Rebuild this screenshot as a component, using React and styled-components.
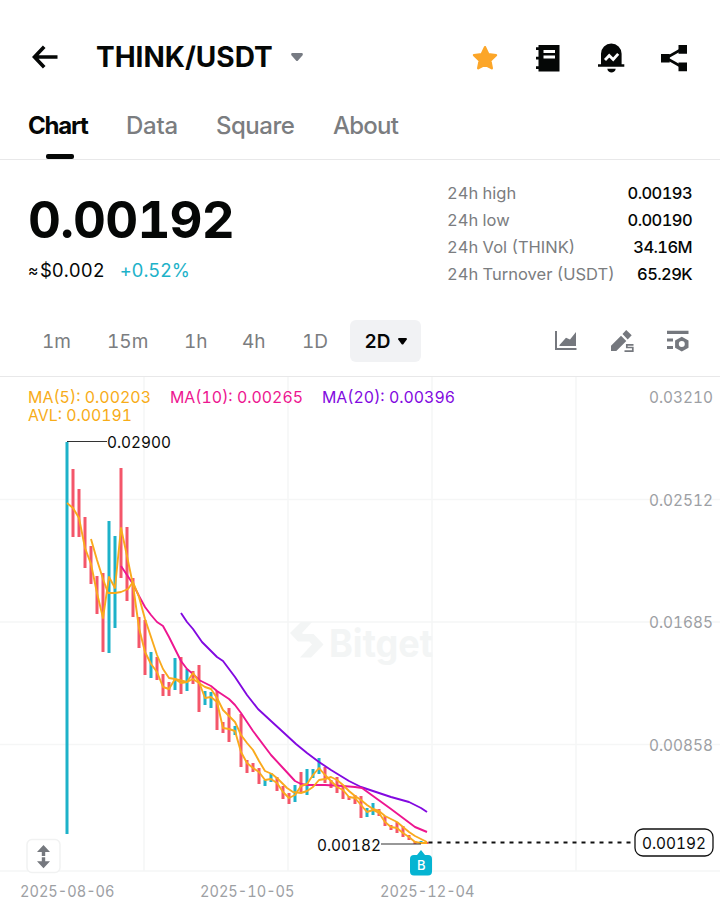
import React from 'react';
import styled, { createGlobalStyle } from 'styled-components';

const UP = '#1db2c9';
const DOWN = '#f4566a';

const tabs = [
	{ name: 'Chart', width: 98, spacing: -1.2 },
	{ name: 'Data', width: 90, spacing: -0.25 },
	{ name: 'Square', width: 117, spacing: -0.5 },
	{ name: 'About', width: 80, spacing: -0.75 },
];

const stats = [
	{ label: '24h high', value: '0.00193' },
	{ label: '24h low', value: '0.00190' },
	{ label: '24h Vol (THINK)', value: '34.16M' },
	{ label: '24h Turnover (USDT)', value: '65.29K' },
];

const periods = [
	{ name: '1m', width: 65 },
	{ name: '15m', width: 77 },
	{ name: '1h', width: 58 },
	{ name: '4h', width: 60 },
	{ name: '1D', width: 62 },
];

const legend = [
	{ text: 'MA(5): 0.00203', x: 28, y: 403, width: 123, color: '#f7ac18' },
	{ text: 'MA(10): 0.00265', x: 170, y: 403, width: 133, color: '#ed1690' },
	{ text: 'MA(20): 0.00396', x: 322, y: 403, width: 133, color: '#8209e0' },
	{ text: 'AVL: 0.00191', x: 28, y: 421, width: 104, color: '#f7ac18' },
];

const prices = [
	{ text: '0.03210', y: 403 },
	{ text: '0.02512', y: 506 },
	{ text: '0.01685', y: 628 },
	{ text: '0.00858', y: 751 },
];

const dates = [
	{ text: '2025-08-06', x: 20 },
	{ text: '2025-10-05', x: 200 },
	{ text: '2025-12-04', x: 380 },
];

// [top, bottom, rising]
const candles = [
	[442, 834, 1], [469, 537, 0], [489, 537, 0], [517, 568, 0], [546, 584, 0],
	[576, 614, 0], [573, 652, 0], [521, 653, 1], [536, 628, 1], [468, 578, 0],
	[527, 601, 0], [578, 617, 0], [617, 648, 0], [620, 675, 0], [652, 678, 1],
	[657, 680, 0], [674, 696, 0], [682, 696, 0], [658, 690, 1], [657, 694, 0],
	[669, 691, 1], [671, 684, 0], [665, 712, 0], [691, 705, 1], [692, 708, 1],
	[691, 730, 0], [722, 733, 0], [708, 742, 0], [726, 735, 1], [714, 767, 0],
	[760, 773, 0], [763, 772, 0], [768, 784, 0], [780, 786, 1], [773, 782, 1],
	[777, 791, 0], [786, 799, 0], [793, 804, 0], [785, 802, 1], [772, 793, 0],
	[769, 795, 1], [769, 778, 1], [758, 774, 1], [767, 783, 0], [780, 788, 0],
	[777, 793, 0], [786, 799, 0], [796, 800, 0], [795, 804, 0], [796, 818, 0],
	[808, 817, 1], [803, 815, 1], [809, 816, 0], [816, 826, 0], [825, 830, 0],
	[822, 833, 0], [826, 837, 0], [835, 840, 0], [841, 844, 0], [841, 844, 1],
	[842, 844, 0],
];

const averages = [
	{
		color: '#8209e0',
		points:
			'181,613 187,622 193,629 202,642 217,657 223,661 235,677 247,695 258,709 271,721 283,732 296,744 307,753 319,762 331,770 349,781 361,787 373,791 379,793 391,797 409,802 421,808 427,812',
	},
	{
		color: '#ed1690',
		points:
			'121,566 127,575 133,584 139,596 145,607 151,615 157,622 163,626 169,637 175,649 181,661 187,669 193,674 199,680 211,686 217,691 229,699 235,705 241,713 253,731 271,755 283,768 295,781 301,784 308,785 325,785 343,786 355,787 362,788 373,796 391,809 403,818 415,827 427,832',
	},
	{
		color: '#f9aa1d',
		points:
			'91,539 97,560 103,579 108,593 115,593 121,592 128,589 133,582 139,597 145,619 151,637 157,655 163,669 169,678 175,679 187,682 193,679 199,683 205,687 211,689 217,698 223,710 229,716 235,722 241,735 247,743 253,750 259,761 265,771 272,774 278,779 287,788 293,792 301,793 307,791 313,787 319,780 325,779 331,777 337,780 343,785 349,791 355,796 361,800 367,805 373,809 379,811 385,816 391,819 397,822 403,827 409,832 415,836 421,839 427,842',
	},
	{
		color: '#f9aa1d',
		points:
			'67,503 73,508 79,518 85,548 91,564 97,593 103,618 109,577 115,588 121,528 127,556 133,585 139,628 145,652 151,664 157,672 163,687 169,689 175,679 181,683 187,682 193,673 199,682 205,698 211,697 217,702 223,728 229,729 235,731 241,752 247,763 253,768 259,772 265,780 271,779 277,783 283,792 289,798 295,795 301,786 307,784 313,775 319,768 325,775 331,781 337,787 343,790 349,797 355,798 361,805 367,812 373,810 379,813 385,822 391,827 397,828 403,833 409,837 415,842 421,843 427,843',
	},
];

const App = () => {
	return (
		<Page>
			<GlobalStyle />
			<Header>
				<BackIcon />
				<Pair>THINK/USDT</Pair>
				<svg width='12' height='9' viewBox='0 0 12 9' fill='#777b83'>
					<path d='M1 0h10q1 .2.8 2L7 7.6q-1 1-2 0L.2 2Q0 .2 1 0z' />
				</svg>
				<Actions>
					<StarIcon />
					<BookIcon />
					<BellIcon />
					<ShareIcon />
				</Actions>
			</Header>
			<Tabs>
				{tabs.map((tab, i) => (
					<Tab
						key={tab.name}
						$active={i === 0}
						$width={tab.width}
						$spacing={tab.spacing}>
						{tab.name}
					</Tab>
				))}
			</Tabs>
			<Summary>
				<div>
					<Price>0.00192</Price>
					<Change>
						<small>≈</small>
						<span>$0.002</span>
						<b>+0.52%</b>
					</Change>
				</div>
				<Stats>
					{stats.map((stat) => (
						<Stat key={stat.label}>
							<dt>{stat.label}</dt>
							<dd>{stat.value}</dd>
						</Stat>
					))}
				</Stats>
			</Summary>
			<Periods>
				{periods.map((period) => (
					<Period key={period.name} $width={period.width}>
						{period.name}
					</Period>
				))}
				<Selected>
					2D
					<svg width='9' height='7' viewBox='0 0 9 7'>
						<path d='M1 0h7q1.3.3.8 1.6L5.3 6.2q-.8.8-1.6 0L.2 1.6Q-.3.3 1 0z' />
					</svg>
				</Selected>
				<Tools>
					<AreaIcon />
					<PencilIcon />
					<SettingsIcon />
				</Tools>
			</Periods>
			<Chart />
		</Page>
	);
};

const BackIcon = () => (
	<svg width='28' height='24' viewBox='0 0 28 24' fill='none' stroke='#050706' strokeWidth='3.6'>
		<path d='M27.5 12H5M14.2 1.8 4.5 12l9.7 10.2' />
	</svg>
);

const StarIcon = () => (
	<svg width='28' height='28' viewBox='0 0 28 28'>
		<path
			d='M14 3.2 17.2 10.1 25 11.2 19.3 16.6 20.8 24.2 14 20.6 7.2 24.2 8.7 16.6 3 11.2 10.8 10.1z'
			fill='#fca629'
			stroke='#fca629'
			strokeWidth='2.4'
			strokeLinejoin='round'
		/>
	</svg>
);

const BookIcon = () => (
	<svg width='28' height='28' viewBox='0 0 28 28'>
		<path
			fillRule='evenodd'
			fill='#050706'
			d='M4.5 1H25.5v26.5H4.5V25H2v-2.7h2.5v-6.8H2v-2.7h2.5V6H2V3.3h2.5zM9.5 6v3H21V6zM9.5 11.5v3H21v-3z'
		/>
	</svg>
);

const BellIcon = () => (
	<svg width='28' height='30' viewBox='0 0 28 30'>
		<path
			fill='#050706'
			d='M4 10.7a10.3 10.3 0 0 1 20.6 0V21.3H27.3v2.4H1v-2.4h3zM10.3 25.8h8.4c-.6 5-7.8 5-8.4 0z'
		/>
		<path d='m8 17 4.2-4.5 4 4 5-5.7' fill='none' stroke='#fff' strokeWidth='2.8' />
	</svg>
);

const ShareIcon = () => (
	<svg width='28' height='28' viewBox='0 0 28 28'>
		<path d='M22 5 6 14l16 9' fill='none' stroke='#050706' strokeWidth='2.6' />
		<path d='M1 10h8.7v8.5H1zM18.5 1H27v8.7h-8.5zM18.5 18.6H27v8.7h-8.5z' fill='#050706' />
	</svg>
);

const AreaIcon = () => (
	<svg width='24' height='24' viewBox='0 0 24 24'>
		<path d='M2 2v18h20.5' fill='none' stroke='#75787e' strokeWidth='2' />
		<path d='M5.5 16 12 8.7l4 1.8L22 3v14H5.5z' fill='#75787e' />
	</svg>
);

const PencilIcon = () => (
	<svg width='26' height='26' viewBox='0 0 26 26'>
		<path
			fill='#75787e'
			d='m2 17.7 10-10 5.3 5.3-10 10H2zM13.5 6.1 17.2 2l5.5 5.3-4 4.2z'
		/>
		<path
			d='M24.5 16.8h-6.7v2.7h6v3.6h-8.3'
			fill='none'
			stroke='#75787e'
			strokeWidth='1.7'
		/>
	</svg>
);

const SettingsIcon = () => (
	<svg width='24' height='24' viewBox='0 0 24 24' fill='#75787e'>
		<path d='M1 1.8h21.5V5H1zM1 9.5h6v3H1zM1 17h6v3H1z' />
		<path
			fillRule='evenodd'
			d='m15.8 7.7 6.7 3.7v7.4l-6.7 3.7-6.7-3.7v-7.4zM15.8 12a3 3 0 1 0 0 6 3 3 0 0 0 0-6z'
		/>
	</svg>
);

const Chart = () => (
	<ChartArea viewBox='0 377 720 531'>
		<g fill='none' stroke='#f5f6f6' strokeWidth='1.5'>
			{[144, 288, 432, 576].map((x) => (
				<path key={x} d={`M${x} 377v494`} />
			))}
			{[499.5, 622, 744.5, 871].map((y) => (
				<path key={y} d={`M0 ${y}h720`} />
			))}
		</g>
		<g fill='#f3f5f5'>
			<path d='M301 622h11l-10 11 8 8.5h-12l-8-8.5zM303 634h10.500l10 10.500-12.500 13h-11l12-13z' />
			<Watermark x='329' y='657' textLength='104' lengthAdjust='spacingAndGlyphs'>
				Bitget
			</Watermark>
		</g>
		{legend.map((item) => (
			<text
				key={item.text}
				x={item.x}
				y={item.y}
				fill={item.color}
				textLength={item.width}
				lengthAdjust='spacingAndGlyphs'>
				{item.text}
			</text>
		))}
		<g fill='#9da0a4'>
			{prices.map((price) => (
				<text
					key={price.text}
					x='649'
					y={price.y}
					textLength='64'
					lengthAdjust='spacingAndGlyphs'>
					{price.text}
				</text>
			))}
			{dates.map((date) => (
				<text
					key={date.text}
					x={date.x}
					y='897'
					textLength='94.5'
					lengthAdjust='spacingAndGlyphs'>
					{date.text}
				</text>
			))}
		</g>
		{candles.map(([top, bottom, rising], i) => (
			<rect
				key={i}
				x={65.5 + i * 6}
				y={top}
				width='3'
				height={bottom - top}
				fill={rising ? UP : DOWN}
			/>
		))}
		{averages.map((line, i) => (
			<polyline
				key={i}
				points={line.points}
				fill='none'
				stroke={line.color}
				strokeWidth='1.9'
				strokeLinejoin='round'
			/>
		))}
		<path d='M67 441.5h40M381 844h40' stroke='#333' strokeWidth='1.2' />
		<g fill='#0b0d0c'>
			<text x='107' y='448' textLength='64' lengthAdjust='spacingAndGlyphs'>
				0.02900
			</text>
			<text x='317' y='851' textLength='64' lengthAdjust='spacingAndGlyphs'>
				0.00182
			</text>
		</g>
		<path d='M428.500 842.500h206' stroke='#111' strokeWidth='1.8' strokeDasharray='4 5' />
		<rect x='635' y='829' width='78' height='27' rx='8' fill='#fff' stroke='#111' strokeWidth='1.3' />
		<text x='642' y='849' fill='#0b0d0c' textLength='64' lengthAdjust='spacingAndGlyphs'>
			0.00192
		</text>
		<path
			d='M414 855h3l4-5 4 5h3q4 0 4 4v12.500q0 4-4 4h-14q-4 0-4-4v-12.500q0-4 4-4z'
			fill='#05b4d2'
		/>
		<Mark x='421.3' y='870'>B</Mark>
		<rect x='27' y='839.5' width='33' height='33' rx='5' fill='#fff' stroke='#f1f2f2' strokeWidth='1.5' />
		<path
			d='M43.5 845 50 852h-4.800v4h-3.400v-4H37zM43.500 868.300 37 861.300h4.800v-4h3.400v4H50z'
			fill='#75787e'
		/>
	</ChartArea>
);

const GlobalStyle = createGlobalStyle`
	* {
		box-sizing: border-box;
	}

	body {
		margin: 0;
		background: #fff;
		color: #050706;
		font-family: Inter, 'Liberation Sans', sans-serif;
		font-feature-settings: 'tnum';
	}

	svg {
		display: block;
		flex: none;
	}
`;

const Page = styled.main`
	width: 720px;
	height: 908px;
	overflow: hidden;
`;

const Header = styled.header`
	height: 96px;
	padding: 18px 32px 0 30px;
	display: flex;
	align-items: center;
`;

const Pair = styled.h1`
	width: 177px;
	margin: 0 18px 0 38px;
	font-size: 28px;
	font-weight: 700;
	letter-spacing: 0;
	white-space: nowrap;
`;

const Actions = styled.div`
	display: flex;
	align-items: center;
	gap: 35px;
	margin-left: auto;
	padding-top: 2px;
`;

const Tabs = styled.nav`
	height: 64px;
	padding-left: 28px;
	display: flex;
	border-bottom: 1px solid #e8e8e9;
`;

const Tab = styled.span`
	width: ${(props) => props.$width}px;
	padding-top: 15px;
	font-size: 24px;
	font-weight: ${(props) => (props.$active ? 700 : 500)};
	line-height: 30px;
	letter-spacing: ${(props) => props.$spacing}px;
	color: ${(props) => (props.$active ? '#050706' : '#7b7d80')};

	&::after {
		content: '';
		display: ${(props) => (props.$active ? 'block' : 'none')};
		width: 28px;
		height: 5px;
		margin: 13px 0 0 18px;
		border-radius: 2px;
		background: #050706;
	}
`;

const Summary = styled.section`
	height: 160px;
	padding: 20px 28px 0;
	display: flex;
	justify-content: space-between;
`;

const Price = styled.div`
	margin-top: 12px;
	font-size: 51px;
	font-weight: 700;
	line-height: 56px;
	letter-spacing: -0.8px;
`;

const Change = styled.div`
	display: flex;
	margin-top: 10px;
	font-size: 18.5px;
	line-height: 24px;

	small {
		width: 12px;
		font-size: 16px;
	}

	b {
		margin-left: 15px;
		font-weight: 400;
		letter-spacing: -0.2px;
		color: ${UP};
	}
`;

const Stats = styled.dl`
	width: 245px;
	margin: 0;
	font-size: 16.5px;
	line-height: 27px;
`;

const Stat = styled.div`
	display: flex;
	justify-content: space-between;
	white-space: nowrap;

	dt {
		color: #7b7d80;
	}

	dd {
		margin: 0;
		font-weight: 500;
		letter-spacing: -0.6px;
	}
`;

const Periods = styled.section`
	height: 57px;
	padding: 0 30px 14px 28px;
	display: flex;
	align-items: center;
	border-bottom: 1px solid #e8e8e9;
`;

const Period = styled.span`
	width: ${(props) => props.$width}px;
	padding-left: 14px;
	font-size: 19px;
	color: #7b7d80;
`;

const Selected = styled.span`
	width: 71px;
	height: 42px;
	display: flex;
	align-items: center;
	justify-content: center;
	gap: 7px;
	border-radius: 6px;
	background: #f1f2f4;
	font-size: 19px;
	font-weight: 600;
`;

const Tools = styled.div`
	display: flex;
	align-items: center;
	gap: 31px;
	margin-left: auto;
`;

const ChartArea = styled.svg`
	width: 720px;
	height: 531px;
	font-size: 16.5px;
`;

const Watermark = styled.text`
	font-size: 38px;
	font-weight: 700;
`;

const Mark = styled.text`
	font-size: 13px;
	font-weight: 500;
	fill: #fff;
	text-anchor: middle;
`;

export default App;
